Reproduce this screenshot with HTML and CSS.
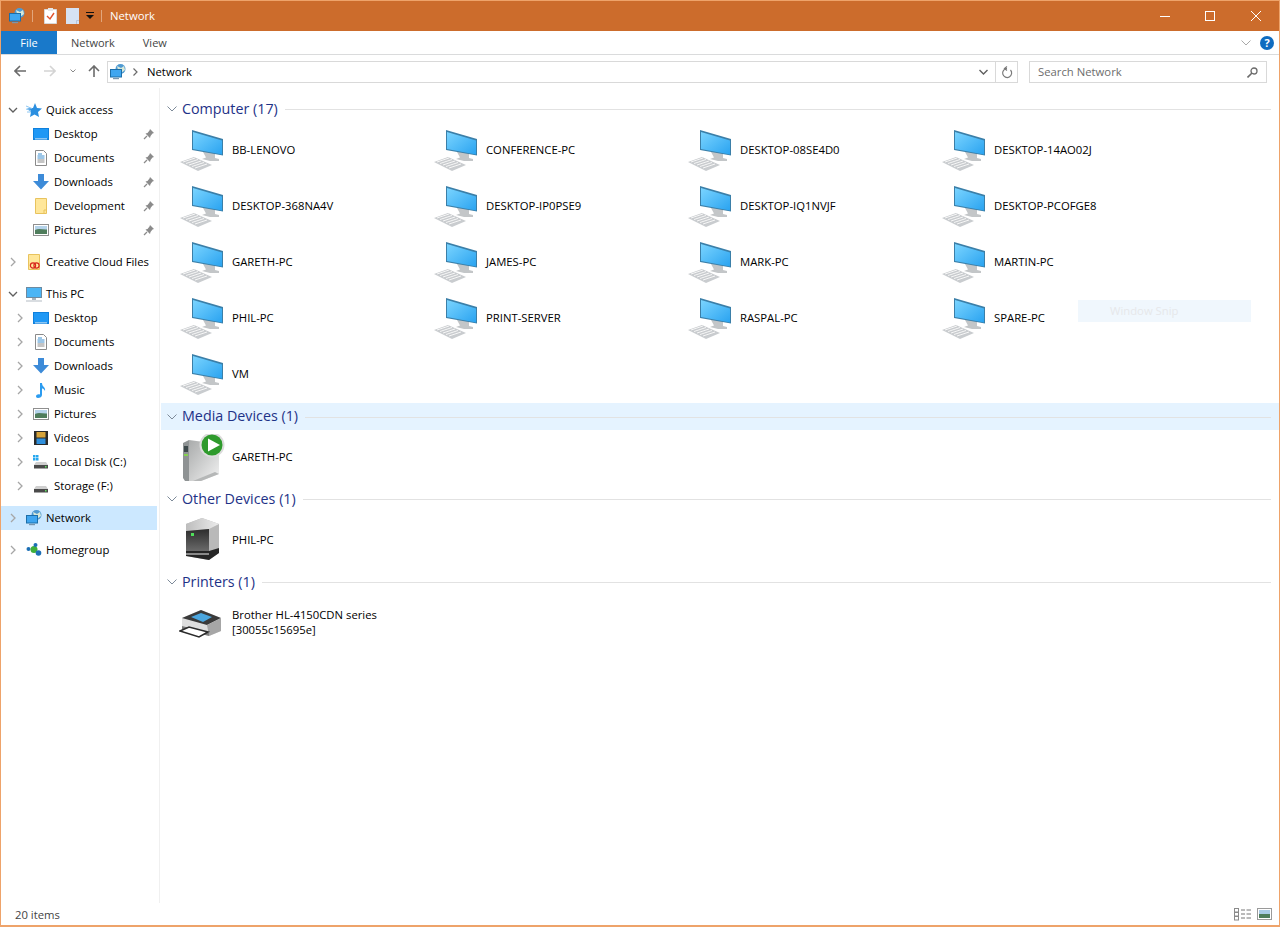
FILE: index.html
```html
<!DOCTYPE html>
<html lang="en">
<head>
  <meta charset="UTF-8" />
  <title>Network</title>
  <link rel="stylesheet" href="styles.css">
</head>
<body>

  <svg class="defs" width="0" height="0">
    <defs>
      <linearGradient id="screen" x1="0" y1="0" x2="1" y2="1">
        <stop offset="0" stop-color="#7ad4ff" />
        <stop offset="1" stop-color="#2aa3f0" />
      </linearGradient>
      <linearGradient id="drive" x1="0" y1="0" x2="1" y2="1">
        <stop offset="0" stop-color="#a9abab" />
        <stop offset="1" stop-color="#f2f2f2" />
      </linearGradient>
      <linearGradient id="lid" x1="0" y1="0" x2="1" y2="0">
        <stop offset="0" stop-color="#bdbdbd" />
        <stop offset="1" stop-color="#ececec" />
      </linearGradient>
      <linearGradient id="front" x1="0" y1="0" x2="0" y2="1">
        <stop offset="0" stop-color="#2c2c2c" />
        <stop offset="1" stop-color="#6a6a6a" />
      </linearGradient>

      <symbol id="pc" viewBox="0 0 48 48">
        <path d="M24 26 H36 V32 L40 33 V35 L31 35 23 33 27 31.5Z" fill="#c3c6c8" />
        <path d="M13 4 44 13 V29.5 L13 24Z" fill="#3b7fa8" />
        <path d="M14 6 43 14.5 V28.5 L14 23Z" fill="url(#screen)" />
        <path d="M1 36 15 31 33 39 19 45Z" fill="#c9cccf" />
        <path d="M4 36 16 32 M7 37.5 19 33.5 M10 39 22 35 M13 40.5 25 36.5 M16 42 28 38" stroke="#f6f6f6" stroke-width="1" />
      </symbol>

      <symbol id="media" viewBox="0 0 48 48">
        <path d="M10 6 40 10 V40 L22 47 H10Z" fill="url(#drive)" />
        <path d="M14 47 36 38 40 40 22 47Z" fill="#b5b7b7" />
        <path d="M4 9 10 6 V47 H6 L4 44Z" fill="#8f9394" />
        <rect x="5" y="12" width="4" height="6" fill="#3e4a4c" />
        <rect x="5" y="20" width="4" height="2" fill="#86d24f" />
        <circle cx="33" cy="11" r="12.5" fill="#dcdcdc" />
        <circle cx="33" cy="11" r="10.5" fill="#2e9a2c" />
        <path d="M29 4.5 41 11 29 17.5Z" fill="#fff" />
      </symbol>

      <symbol id="device" viewBox="0 0 48 48">
        <path d="M7 8 23 2 40 8 V37 L30 44 7 40Z" fill="#b9b9b9" />
        <path d="M7 8 23 2 40 8 30 13 7 15Z" fill="url(#lid)" />
        <path d="M7 15 30 13 V35 H7Z" fill="url(#front)" />
        <path d="M7 35 H30 L40 32 V37 L30 44 7 40Z" fill="#262626" />
        <path d="M7 37 H30 V39 H7Z" fill="#8a8a8a" />
        <rect x="12" y="17" width="3" height="3" fill="#4fe05a" />
      </symbol>

      <symbol id="printer" viewBox="0 0 48 48">
        <path d="M3 19 22 11 42 19 V32 L30 37 3 30Z" fill="#dedede" />
        <path d="M3 19 22 11 42 19 28 26Z" fill="#3a3a3a" />
        <path d="M12 18 22 14 33 18 24 23Z" fill="#4ba6de" />
        <path d="M28 26 42 19 V32 L30 37Z" fill="#a6a6a6" />
        <path d="M3 30 30 37 V34 L3 27Z" fill="#7c7c7c" />
        <path d="M1 32 10 28 29 33 20 38Z" fill="#fff" stroke="#2b2b2b" stroke-width="1.6" />
      </symbol>

      <symbol id="net" viewBox="0 0 16 16">
        <circle cx="10.5" cy="5" r="5" fill="#4f9ad2" />
        <path d="M7 2 11 4 14 2 15 6 11 9 8 6Z" fill="#d8e8d8" />
        <rect x="0.5" y="5.5" width="11" height="7.5" fill="#3fa6f0" stroke="#1c6ea8" />
        <rect x="3" y="14" width="6" height="1.2" fill="#7a96ad" />
      </symbol>

      <symbol id="desk" viewBox="0 0 16 16">
        <rect x="0" y="2" width="16" height="12" fill="#0f80dc" />
        <rect x="1" y="3" width="14" height="9.5" fill="#1f98f5" />
        <rect x="2" y="12.5" width="12" height="0.8" fill="#fff" />
      </symbol>

      <symbol id="doc" viewBox="0 0 16 16">
        <path d="M2.5 0.5 H10.5 L13.5 3.5 V15.5 H2.5Z" fill="#fff" stroke="#8a8a8a" />
        <path d="M5 4 H9 M4.5 6 H11.5 M4.5 8 H11.5" stroke="#3b8ed0" />
        <path d="M4.5 10 H11.5 M4.5 12 H11.5" stroke="#8a8a8a" />
      </symbol>

      <symbol id="down" viewBox="0 0 16 16">
        <path d="M5 0 H11 V7 H16 L8 15.5 0 7 H5Z" fill="#3d8bd8" />
      </symbol>

      <symbol id="folder" viewBox="0 0 16 16">
        <path d="M2.5 0.5 H13.5 V15.5 H2.5Z" fill="#ffe79a" stroke="#e8c35e" />
        <path d="M11 15.5 V12 H13.5" fill="none" stroke="#e8c35e" />
      </symbol>

      <symbol id="pics" viewBox="0 0 16 16">
        <rect x="0.5" y="2.5" width="15" height="11" fill="#fff" stroke="#8f8f8f" />
        <rect x="2" y="4" width="12" height="4" fill="#b5d3ea" />
        <path d="M2 8 C6 6 10 8 14 7.5 V12 H2Z" fill="#4f7d5c" />
      </symbol>

      <symbol id="pin" viewBox="0 0 12 12">
        <path d="M7 1 11 5 9.5 5.5 7.5 8 7 10 2.5 5.5 4.5 5 6.5 2.5Z" fill="#8b8b8b" />
        <path d="M4 8 1 11" stroke="#8b8b8b" stroke-width="1.2" />
      </symbol>

      <symbol id="chev-r" viewBox="0 0 10 10">
        <path d="M3 1 7 5 3 9" fill="none" stroke="#a6a6a6" stroke-width="1.3" />
      </symbol>
      <symbol id="chev-d" viewBox="0 0 10 10">
        <path d="M1 3 5 7 9 3" fill="none" stroke="#5f5f5f" stroke-width="1.3" />
      </symbol>
      <symbol id="head-chev" viewBox="0 0 10 6">
        <path d="M0.5 0.5 5 5 9.5 0.5" fill="none" stroke="#7d8a99" />
      </symbol>
    </defs>
  </svg>

  <div class="window">

    <header class="titlebar">
      <svg class="qat-icon" width="16" height="16"><use href="#net" /></svg>
      <span class="qat-sep first"></span>
      <svg class="qat-props" width="13" height="16" viewBox="0 0 13 16">
        <path d="M0.5 1.5 H12.5 V15.5 H0.5Z" fill="#fff" stroke="#d8d8d8" />
        <rect x="4" y="0" width="5" height="3" fill="#e7e7e7" />
        <path d="M3 8 6 11 10 5" fill="none" stroke="#e0522c" stroke-width="1.4" />
      </svg>
      <svg class="qat-new" width="13" height="16" viewBox="0 0 13 16">
        <path d="M0 0 H13 V16 H0Z" fill="#d6e2f3" />
        <path d="M10.5 16 V12.5 H13" fill="none" stroke="#b4c4dc" />
      </svg>
      <svg class="qat-more" width="8" height="7" viewBox="0 0 8 7">
        <rect x="0" y="0" width="8" height="1" fill="#111" />
        <path d="M0 3 H8 L4 7Z" fill="#111" />
      </svg>
      <span class="qat-sep"></span>
      <span class="title">Network</span>
      <div class="winbtns">
        <svg width="10" height="10" viewBox="0 0 10 10"><path d="M0 5.5 H10" stroke="#fff" /></svg>
        <svg class="win-max" width="10" height="10" viewBox="0 0 10 10"><rect x="0.5" y="0.5" width="9" height="9" fill="none" stroke="#fff" /></svg>
        <svg width="10" height="10" viewBox="0 0 10 10"><path d="M0 0 10 10 M10 0 0 10" stroke="#fff" /></svg>
      </div>
    </header>

    <div class="ribbon">
      <a class="tab file" href="#">File</a>
      <a class="tab" href="#">Network</a>
      <a class="tab" href="#">View</a>
      <svg class="rib-chev" width="10" height="8" viewBox="0 0 10 8"><path d="M0.5 1.5 5 6 9.5 1.5" fill="none" stroke="#a9a9a9" /></svg>
      <span class="help">?</span>
    </div>

    <div class="addressbar">
      <svg class="nav-ico" width="12" height="12" viewBox="0 0 12 12"><path d="M6 1 1 6 6 11 M1 6 H12" fill="none" stroke="#6b6b6b" stroke-width="1.6" /></svg>
      <svg class="nav-ico fwd" width="12" height="12" viewBox="0 0 12 12"><path d="M6 1 11 6 6 11 M11 6 H0" fill="none" stroke="#d4d4d4" stroke-width="1.6" /></svg>
      <svg class="nav-ico hist" width="6" height="4" viewBox="0 0 6 4"><path d="M0.5 0.5 3 3 5.5 0.5" fill="none" stroke="#8a8a8a" /></svg>
      <svg class="nav-ico up" width="12" height="12" viewBox="0 0 12 12"><path d="M1 6 6 1 11 6 M6 1 V12" fill="none" stroke="#6b6b6b" stroke-width="1.6" /></svg>
      <div class="address">
        <svg class="addr-net" width="16" height="16"><use href="#net" /></svg>
        <svg class="addr-sep" width="5" height="8" viewBox="0 0 5 8"><path d="M0.5 0.5 4 4 0.5 7.5" fill="none" stroke="#6b6b6b" stroke-width="1.2" /></svg>
        <span class="addr-text">Network</span>
        <svg class="addr-drop" width="9" height="6" viewBox="0 0 9 6"><path d="M0.5 1 4.5 5 8.5 1" fill="none" stroke="#5f5f5f" stroke-width="1.4" /></svg>
        <span class="refresh">
          <svg width="12" height="13" viewBox="0 0 12 13"><path d="M9.5 4 A4.5 4.5 0 1 1 6 2.5 H3.5 M6 0.5 L3.5 2.5 6 4.5" fill="none" stroke="#7a7a7a" stroke-width="1.2" /></svg>
        </span>
      </div>
      <div class="search">
        <span class="search-text">Search Network</span>
        <svg width="11" height="11" viewBox="0 0 11 11"><circle cx="7" cy="4" r="3" fill="none" stroke="#6b6b6b" stroke-width="1.3" /><path d="M5 6 0.5 10.5" stroke="#6b6b6b" stroke-width="1.6" /></svg>
      </div>
    </div>

    <div class="content">
      <nav class="sidebar">
        <ul class="tree">
          <li class="row top"><svg class="arrow"><use href="#chev-d" /></svg>
            <svg class="ico" viewBox="0 0 16 16"><path d="M9 1 11 6 16 6.5 12 10 13 15 8.5 12.5 4 15 5 10 1 6.5 7 6Z" fill="#2b8fe0" /><path d="M0 4 6 6.5 M0 7 5 8.5 M1 10 5 10" stroke="#8cc6f2" /></svg>Quick access</li>
          <li class="row sub"><svg class="ico"><use href="#desk" /></svg>Desktop<svg class="pin"><use href="#pin" /></svg></li>
          <li class="row sub"><svg class="ico"><use href="#doc" /></svg>Documents<svg class="pin"><use href="#pin" /></svg></li>
          <li class="row sub"><svg class="ico"><use href="#down" /></svg>Downloads<svg class="pin"><use href="#pin" /></svg></li>
          <li class="row sub"><svg class="ico"><use href="#folder" /></svg>Development<svg class="pin"><use href="#pin" /></svg></li>
          <li class="row sub"><svg class="ico"><use href="#pics" /></svg>Pictures<svg class="pin"><use href="#pin" /></svg></li>
        </ul>
        <ul class="tree">
          <li class="row top"><svg class="arrow"><use href="#chev-r" /></svg>
            <svg class="ico" viewBox="0 0 16 16"><path d="M2.5 0.5 H13.5 V15.5 H2.5Z" fill="#ffe79a" stroke="#e8c35e" /><circle cx="7" cy="11.5" r="2.6" fill="none" stroke="#d8261c" stroke-width="1.2" /><circle cx="10.5" cy="11.5" r="2.6" fill="none" stroke="#d8261c" stroke-width="1.2" /></svg>Creative Cloud Files</li>
        </ul>
        <ul class="tree">
          <li class="row top"><svg class="arrow"><use href="#chev-d" /></svg>
            <svg class="ico" viewBox="0 0 16 16"><rect x="0.5" y="1.5" width="15" height="10" fill="#4bb5f5" stroke="#6d8aa0" /><rect x="6" y="12" width="4" height="2" fill="#a8b4bd" /><rect x="0" y="14.5" width="16" height="1" fill="#b4bcc3" /></svg>This PC</li>
          <li class="row sub"><svg class="arrow"><use href="#chev-r" /></svg><svg class="ico"><use href="#desk" /></svg>Desktop</li>
          <li class="row sub"><svg class="arrow"><use href="#chev-r" /></svg><svg class="ico"><use href="#doc" /></svg>Documents</li>
          <li class="row sub"><svg class="arrow"><use href="#chev-r" /></svg><svg class="ico"><use href="#down" /></svg>Downloads</li>
          <li class="row sub"><svg class="arrow"><use href="#chev-r" /></svg>
            <svg class="ico" viewBox="0 0 16 16"><path d="M7 1 H9 C9 5 13 5 12 9 C11 7 10 6.5 9 6.5 V13 C9 15 7 16 5 16 C3 16 2.5 14 3.5 13 C4.5 12 6 12 7 12.5Z" fill="#2c9cf0" /></svg>Music</li>
          <li class="row sub"><svg class="arrow"><use href="#chev-r" /></svg><svg class="ico"><use href="#pics" /></svg>Pictures</li>
          <li class="row sub"><svg class="arrow"><use href="#chev-r" /></svg>
            <svg class="ico" viewBox="0 0 16 16"><rect x="1" y="1" width="14" height="14" fill="#2a2a2a" /><rect x="3.5" y="2" width="9" height="5.5" fill="#d6a33a" /><rect x="3.5" y="8.5" width="9" height="5.5" fill="#2f8fdc" /></svg>Videos</li>
          <li class="row sub"><svg class="arrow"><use href="#chev-r" /></svg>
            <svg class="ico" viewBox="0 0 16 16"><rect x="0" y="1" width="2.5" height="2.5" fill="#26a8ef" /><rect x="3" y="1" width="2.5" height="2.5" fill="#26a8ef" /><rect x="0" y="4" width="2.5" height="2.5" fill="#26a8ef" /><rect x="3" y="4" width="2.5" height="2.5" fill="#26a8ef" /><path d="M3 8 H13 L15 11 H1Z" fill="#cfcfcf" /><rect x="1" y="11" width="14" height="3.5" fill="#4a4a4a" /><rect x="12" y="12" width="1.5" height="1.5" fill="#5fe05f" /></svg>Local Disk (C:)</li>
          <li class="row sub"><svg class="arrow"><use href="#chev-r" /></svg>
            <svg class="ico" viewBox="0 0 16 16"><path d="M3 8 H13 L15 11 H1Z" fill="#cfcfcf" /><rect x="1" y="11" width="14" height="3.5" fill="#4a4a4a" /><rect x="12" y="12" width="1.5" height="1.5" fill="#5fe05f" /></svg>Storage (F:)</li>
        </ul>
        <ul class="tree">
          <li class="row top selected"><svg class="arrow"><use href="#chev-r" /></svg><svg class="ico"><use href="#net" /></svg>Network</li>
        </ul>
        <ul class="tree">
          <li class="row top"><svg class="arrow"><use href="#chev-r" /></svg>
            <svg class="ico" viewBox="0 0 16 16"><circle cx="2.5" cy="7" r="2" fill="#1c6fb5" /><circle cx="8" cy="7.5" r="3.5" fill="#3faf3a" /><circle cx="9.5" cy="3" r="2" fill="#1c6fb5" /><circle cx="12.5" cy="11" r="2.8" fill="#1c6fb5" /></svg>Homegroup</li>
        </ul>
      </nav>

      <main class="files">
        <section class="group computers">
          <h2 class="group-head"><svg class="head-chev"><use href="#head-chev" /></svg><span>Computer (17)</span><i></i></h2>
          <div class="grid">
            <div class="item"><svg class="big"><use href="#pc" /></svg><span>BB-LENOVO</span></div>
            <div class="item"><svg class="big"><use href="#pc" /></svg><span>CONFERENCE-PC</span></div>
            <div class="item"><svg class="big"><use href="#pc" /></svg><span>DESKTOP-08SE4D0</span></div>
            <div class="item"><svg class="big"><use href="#pc" /></svg><span>DESKTOP-14AO02J</span></div>
            <div class="item"><svg class="big"><use href="#pc" /></svg><span>DESKTOP-368NA4V</span></div>
            <div class="item"><svg class="big"><use href="#pc" /></svg><span>DESKTOP-IP0PSE9</span></div>
            <div class="item"><svg class="big"><use href="#pc" /></svg><span>DESKTOP-IQ1NVJF</span></div>
            <div class="item"><svg class="big"><use href="#pc" /></svg><span>DESKTOP-PCOFGE8</span></div>
            <div class="item"><svg class="big"><use href="#pc" /></svg><span>GARETH-PC</span></div>
            <div class="item"><svg class="big"><use href="#pc" /></svg><span>JAMES-PC</span></div>
            <div class="item"><svg class="big"><use href="#pc" /></svg><span>MARK-PC</span></div>
            <div class="item"><svg class="big"><use href="#pc" /></svg><span>MARTIN-PC</span></div>
            <div class="item"><svg class="big"><use href="#pc" /></svg><span>PHIL-PC</span></div>
            <div class="item"><svg class="big"><use href="#pc" /></svg><span>PRINT-SERVER</span></div>
            <div class="item"><svg class="big"><use href="#pc" /></svg><span>RASPAL-PC</span></div>
            <div class="item"><svg class="big"><use href="#pc" /></svg><span>SPARE-PC</span></div>
            <div class="item"><svg class="big"><use href="#pc" /></svg><span>VM</span></div>
          </div>
        </section>

        <section class="group media-group">
          <h2 class="group-head hover"><svg class="head-chev"><use href="#head-chev" /></svg><span>Media Devices (1)</span><i></i></h2>
          <div class="grid">
            <div class="item"><svg class="big"><use href="#media" /></svg><span>GARETH-PC</span></div>
          </div>
        </section>

        <section class="group">
          <h2 class="group-head"><svg class="head-chev"><use href="#head-chev" /></svg><span>Other Devices (1)</span><i></i></h2>
          <div class="grid">
            <div class="item"><svg class="big"><use href="#device" /></svg><span>PHIL-PC</span></div>
          </div>
        </section>

        <section class="group">
          <h2 class="group-head"><svg class="head-chev"><use href="#head-chev" /></svg><span>Printers (1)</span><i></i></h2>
          <div class="grid">
            <div class="item"><svg class="big"><use href="#printer" /></svg><span>Brother HL-4150CDN series<br>[30055c15695e]</span></div>
          </div>
        </section>

        <div class="snip">Window Snip</div>
      </main>
    </div>

    <footer class="status">
      <span>20 items</span>
      <svg width="17" height="13" viewBox="0 0 17 13">
        <rect x="0.5" y="0.5" width="4" height="3.5" fill="#fff" stroke="#8a8a8a" />
        <rect x="0.5" y="4.5" width="4" height="3.5" fill="#fff" stroke="#8a8a8a" />
        <rect x="0.5" y="8.5" width="4" height="3.5" fill="#fff" stroke="#8a8a8a" />
        <path d="M7 2 H11 M12.5 2 H17 M7 6 H11 M12.5 6 H17 M7 10 H11 M12.5 10 H17" stroke="#777" />
      </svg>
      <svg class="view-on" width="15" height="12" viewBox="0 0 15 12">
        <rect x="0.5" y="0.5" width="14" height="11" fill="#fff" stroke="#9a9a9a" />
        <rect x="2" y="2" width="11" height="4" fill="#a9cbe6" />
        <rect x="2" y="6" width="11" height="4" fill="#4f7d5c" />
      </svg>
    </footer>
  </div>

</body>
</html>
```

FILE: styles.css
```css
* {
  box-sizing: border-box;
}

html, body {
  margin: 0;
  height: 100%;
}

body {
  font-family: "Open Sans", "Noto Sans", sans-serif;
  font-size: 11.3px;
  color: #000;
  background: #fff;
  overflow: hidden;
}

.defs {
  position: absolute;
}

.window {
  height: 100vh;
  display: flex;
  flex-direction: column;
  border: 1px solid #eea36a;
  border-bottom-width: 2px;
}

/* title bar */
.titlebar {
  height: 30px;
  flex: none;
  background: #cc6c2c;
  display: flex;
  align-items: center;
  padding: 0 0 1px 8px;
  color: #fff;
}

.qat-sep {
  width: 1px;
  height: 12px;
  background: #e2a67c;
  margin: 0 7px;
}

.qat-sep.first {
  margin: 0 11px 0 7px;
}

.qat-new {
  margin-left: 9px;
}

.qat-more {
  margin-left: 7px;
}

.title {
  margin-left: 1px;
}

.winbtns {
  margin-left: auto;
  display: flex;
  gap: 35px;
  padding-right: 18px;
}

.win-max {
  margin-right: 1px;
}

/* ribbon */
.ribbon {
  height: 24px;
  flex: none;
  display: flex;
  align-items: center;
  border-bottom: 1px solid #dadbdc;
  padding-right: 5px;
}

.tab {
  color: #444;
  text-decoration: none;
  font-size: 11px;
  padding: 0 14px;
  line-height: 23px;
}

.tab.file {
  width: 56px;
  height: 23px;
  background: #1979ca;
  color: #fff;
  text-align: center;
  padding: 0;
}

.rib-chev {
  margin-left: auto;
  margin-right: 9px;
}

.help {
  width: 14px;
  height: 14px;
  border-radius: 50%;
  background: #0f6cc0;
  color: #fff;
  font-size: 11px;
  font-weight: 700;
  line-height: 14px;
  text-align: center;
}

/* address bar */
.addressbar {
  height: 33px;
  flex: none;
  display: flex;
  align-items: flex-start;
  padding: 6px 12px 0 13px;
}

.nav-ico {
  flex: none;
  margin-top: 4px;
}

.nav-ico.fwd {
  margin-left: 18px;
}

.nav-ico.hist {
  margin: 8px 0 0 14px;
}

.nav-ico.up {
  margin-left: 12px;
}

.address {
  margin-left: 7px;
  width: 911px;
  height: 22px;
  border: 1px solid #d9d9d9;
  display: flex;
  align-items: center;
  padding-left: 2px;
}

.addr-sep {
  margin-left: 7px;
}

.addr-text {
  margin: 0 0 2px 9px;
}

.addr-drop {
  margin-left: auto;
  margin-right: 7px;
}

.refresh {
  width: 22px;
  height: 20px;
  border-left: 1px solid #d9d9d9;
  display: flex;
  align-items: center;
  justify-content: center;
}

.search {
  margin-left: 11px;
  width: 238px;
  height: 22px;
  border: 1px solid #d9d9d9;
  display: flex;
  align-items: center;
  justify-content: space-between;
  padding: 0 8px;
  color: #6d6d6d;
}

.search-text {
  margin-bottom: 2px;
}

/* body */
.content {
  flex: 1;
  min-height: 0;
  display: flex;
}

.sidebar {
  width: 159px;
  flex: none;
  border-right: 1px solid #f0f0f0;
  padding: 10px 2px 0 0;
}

.tree {
  list-style: none;
  margin: 0 0 8px;
  padding: 0;
}

.row {
  height: 24px;
  display: flex;
  align-items: center;
  white-space: nowrap;
  position: relative;
  padding: 0 0 2px 7px;
}

.row.sub {
  padding-left: 32px;
}

.row.top .ico {
  margin-right: 4px;
}

.row.sub .arrow {
  margin-left: -18px;
}

.row.selected {
  background: #cce8ff;
}

.arrow {
  width: 10px;
  height: 10px;
  flex: none;
  margin: 2px 8px 0 0;
}

.ico {
  width: 16px;
  height: 16px;
  flex: none;
  margin: 2px 5px 0 0;
}

.pin {
  width: 12px;
  height: 12px;
  position: absolute;
  left: 142px;
  top: 6px;
}

.files {
  flex: 1;
  position: relative;
  padding-top: 7px;
  margin-left: 1px;
}

.group-head {
  height: 27px;
  margin: 0;
  display: flex;
  align-items: center;
  font-size: 14.3px;
  font-weight: 400;
  color: #1e3287;
  padding: 0 8px 0 6px;
}

.group-head span {
  margin-bottom: 1px;
}

.group-head.hover {
  background: #e5f3ff;
}

.head-chev {
  width: 10px;
  height: 6px;
  margin-right: 5px;
  flex: none;
}

.group-head i {
  flex: 1;
  height: 1px;
  background: #e2e2e2;
  margin: 2px 0 0 7px;
}

.grid {
  display: grid;
  grid-template-columns: repeat(4, 254px);
  padding-left: 18px;
}

.computers {
  margin-bottom: 1px;
}

.media-group .group-head span {
  margin-bottom: 2px;
}

.media-group .item {
  height: 55px;
}

.item {
  height: 56px;
  display: flex;
  align-items: center;
  gap: 5px;
  line-height: 15px;
}

.item span {
  margin-bottom: 2px;
}

.big {
  width: 48px;
  height: 48px;
  flex: none;
}

.snip {
  position: absolute;
  left: 917px;
  top: 212px;
  width: 173px;
  height: 22px;
  background: #f0f7fd;
  color: #e6e7ea;
  line-height: 22px;
  padding-left: 32px;
}

/* status bar */
.status {
  height: 22px;
  flex: none;
  display: flex;
  align-items: center;
  padding: 0 7px 0 14px;
  color: #444;
  gap: 6px;
}

.status span {
  margin-right: auto;
}
```
